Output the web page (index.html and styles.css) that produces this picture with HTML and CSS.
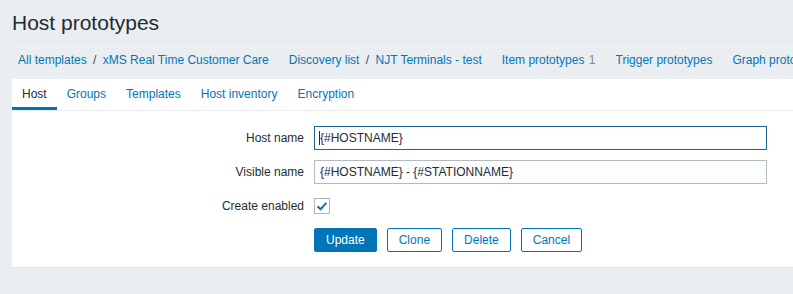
FILE: index.html
```html
<!DOCTYPE html>
<html>
  <head>
    <meta charset="UTF-8" />
    <meta name="viewport" content="width=device-width, initial-scale=1">
    <title>Host prototypes</title>
    <link rel="stylesheet" href="styles.css">
  </head>
  <body>
    <div class="page">
      <header class="page-header">
        <h1 class="page-title">Host prototypes</h1>
      </header>

      <nav class="breadcrumbs">
        <div class="crumb-group">
          <a href="#">All templates</a>
          <span class="sep">/</span>
          <a href="#">xMS Real Time Customer Care</a>
        </div>
        <div class="crumb-group">
          <a href="#">Discovery list</a>
          <span class="sep">/</span>
          <a href="#">NJT Terminals - test</a>
        </div>
        <div class="crumb-group">
          <a href="#">Item prototypes</a>
          <sup class="count">1</sup>
        </div>
        <div class="crumb-group">
          <a href="#">Trigger prototypes</a>
        </div>
        <div class="crumb-group">
          <a href="#">Graph prototypes</a>
        </div>
      </nav>

      <div class="card">
        <ul class="tabs">
          <li class="tab active"><a href="#">Host</a></li>
          <li class="tab"><a href="#">Groups</a></li>
          <li class="tab"><a href="#">Templates</a></li>
          <li class="tab"><a href="#">Host inventory</a></li>
          <li class="tab"><a href="#">Encryption</a></li>
        </ul>

        <form class="form-grid">
          <label class="form-label" for="host">Host name</label>
          <span class="field focused">
            <input class="text-input" type="text" id="host" value="{#HOSTNAME}">
          </span>

          <label class="form-label" for="visible">Visible name</label>
          <span class="field">
            <input class="text-input" type="text" id="visible" value="{#HOSTNAME} - {#STATIONNAME}">
          </span>

          <label class="form-label" for="enabled">Create enabled</label>
          <span class="field">
            <span class="checkbox" id="enabled">
              <svg width="16" height="16" viewBox="0 0 16 16">
                <path d="M3.5 8.2 L6.6 11.2 L12.3 4.8" fill="none" stroke="#1f6ea4" stroke-width="2"/>
              </svg>
            </span>
          </span>

          <span></span>
          <div class="form-buttons">
            <button type="button" class="btn primary">Update</button>
            <button type="button" class="btn">Clone</button>
            <button type="button" class="btn">Delete</button>
            <button type="button" class="btn">Cancel</button>
          </div>
        </form>
      </div>
    </div>
  </body>
</html>
```

FILE: styles.css
```css
:root {
  --page-bg: #ebeef0;
  --text: #1f2c33;
  --link: #0275b8;
  --muted: #768d99;
  --line: #dfe4e7;
  --input-border: #b5babd;
  --focus-border: #1e6592;
}

* {
  margin: 0;
  padding: 0;
  box-sizing: border-box;
}

body {
  font-family: 'Liberation Sans', Arial, sans-serif;
  font-size: 12px;
  line-height: 14px;
  color: var(--text);
  background: var(--page-bg);
  overflow: hidden;
}

.page {
  width: 1000px;
  padding-left: 12px;
}

.page-header {
  padding: 11px 0 6px;
  border-bottom: 1px solid #e2e6e9;
}

.page-title {
  font-size: 21px;
  line-height: 24px;
  font-weight: normal;
  color: var(--text);
}

.breadcrumbs {
  display: flex;
  gap: 20px;
  padding: 11px 0 12px 6px;
  white-space: nowrap;
}

.breadcrumbs a {
  color: var(--link);
  text-decoration: none;
}

.crumb-group .sep {
  margin: 0 3px;
  color: #3d4b53;
}

.crumb-group .count {
  font-size: 12px;
  vertical-align: baseline;
  color: var(--muted);
  margin-left: 1px;
}

.card {
  background: #fff;
  border-bottom: 1px solid var(--line);
}

.tabs {
  list-style: none;
  display: flex;
  border-bottom: 1px solid var(--page-bg);
}

.tab a {
  display: block;
  padding: 8px 10px 6px;
  border-bottom: 3px solid transparent;
  color: var(--link);
  text-decoration: none;
}

.tab.active a {
  color: var(--text);
  border-bottom-color: var(--link);
}

.form-grid {
  display: grid;
  grid-template-columns: 292px 453px;
  column-gap: 10px;
  row-gap: 10px;
  padding: 15px 0;
}

.form-label {
  text-align: right;
  line-height: 24px;
  white-space: nowrap;
}

.field {
  display: flex;
  align-items: center;
  height: 24px;
  position: relative;
}

.text-input {
  width: 100%;
  height: 24px;
  padding: 0 5px;
  border: 1px solid var(--input-border);
  background: #fcfdfe;
  font-family: inherit;
  font-size: 12px;
  color: var(--text);
  outline: none;
}

.field.focused .text-input {
  border-color: var(--focus-border);
  background: #fff;
}

.field.focused::after {
  content: '';
  position: absolute;
  left: 5px;
  top: 5px;
  height: 14px;
  border-left: 1px solid var(--text);
}

.checkbox {
  display: block;
  width: 16px;
  height: 16px;
  border: 1px solid #acb5ba;
  background: #fff;
  position: relative;
}

.checkbox svg {
  position: absolute;
  left: -1px;
  top: -1px;
}

.form-buttons {
  display: flex;
  gap: 10px;
}

.btn {
  height: 24px;
  padding: 0 11px;
  border: 1px solid var(--link);
  border-radius: 2px;
  background: #fff;
  color: var(--link);
  font-family: inherit;
  font-size: 12px;
  cursor: pointer;
}

.btn.primary {
  background: var(--link);
  color: #fff;
}
```
